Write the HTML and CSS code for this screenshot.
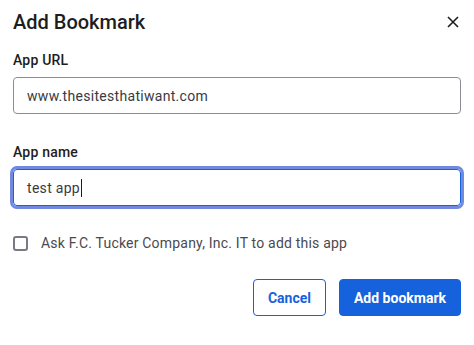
FILE: index.html
```html
<!DOCTYPE html>
<html lang="en">
<head>
    <meta charset="UTF-8">
    <meta name="viewport" content="width=device-width, initial-scale=1.0">
    <title>Add Bookmark</title>
    <link rel="stylesheet" href="styles.css">
</head>
<body>
    <div class="dialog">
        <div class="dialog-header">
            <h1>Add Bookmark</h1>
            <button class="close-btn" aria-label="Close">
                <svg width="12" height="12" viewBox="0 0 12 12">
                    <path d="M1 1 L11 11 M11 1 L1 11" stroke="#1d1d21" stroke-width="1.6" fill="none"/>
                </svg>
            </button>
        </div>

        <label class="field-label" for="appUrl">App URL</label>
        <div class="field">
            <input type="text" id="appUrl" value="www.thesitesthatiwant.com">
        </div>

        <label class="field-label second" for="appName">App name</label>
        <div class="field focused">
            <span class="field-value">test app</span><span class="caret"></span>
        </div>

        <label class="check-row">
            <span class="checkbox"></span>
            <span>Ask F.C. Tucker Company, Inc. IT to add this app</span>
        </label>

        <div class="actions">
            <button class="btn btn-secondary">Cancel</button>
            <button class="btn btn-primary">Add bookmark</button>
        </div>
    </div>
</body>
</html>
```

FILE: styles.css
```css
body {
    margin: 0;
    background: #fff;
    font-family: Roboto, "Noto Sans", Arial, sans-serif;
    color: #1d1d21;
}
.dialog {
    padding: 8px 13px 13px 13px;
}
.dialog-header {
    display: flex;
    align-items: center;
    justify-content: space-between;
}
h1 {
    margin: 0;
    font-size: 20px;
    line-height: 28px;
    font-weight: 500;
    color: #1d1d21;
}
.close-btn {
    background: none;
    border: none;
    padding: 0;
    margin-right: 1px;
    width: 14px;
    height: 14px;
    display: flex;
    align-items: center;
    justify-content: center;
    cursor: pointer;
}
.field-label {
    display: block;
    margin-top: 14px;
    font-size: 14px;
    line-height: 20px;
    font-weight: 500;
    letter-spacing: 0.2px;
    color: #1d1d21;
}
.field-label.second {
    margin-top: 28px;
}
.field {
    margin-top: 7px;
    height: 37px;
    box-sizing: border-box;
    border: 1px solid #8c8c96;
    border-radius: 4px;
    display: flex;
    align-items: center;
    padding: 0 13px;
}
.field input {
    border: none;
    outline: none;
    padding: 0;
    width: 100%;
    font-family: inherit;
    font-size: 14px;
    letter-spacing: 0.3px;
    color: #3a3a3f;
    background: transparent;
}
.field.focused {
    border-color: #1662dd;
    box-shadow: 0 0 0 3px #7289e0;
}
.field-value {
    font-size: 14px;
    letter-spacing: 0.3px;
    color: #3a3a3f;
}
.caret {
    display: inline-block;
    width: 1px;
    height: 18px;
    background: #1d1d21;
    margin-left: 1px;
}
.check-row {
    display: flex;
    align-items: center;
    margin-top: 27px;
    font-size: 14px;
    line-height: 20px;
    letter-spacing: 0.2px;
    color: #4a4a50;
}
.checkbox {
    width: 15px;
    height: 15px;
    box-sizing: border-box;
    border: 2px solid #7a7a85;
    border-radius: 3px;
    margin-right: 13px;
}
.actions {
    display: flex;
    justify-content: flex-end;
    gap: 13px;
    margin-top: 26px;
}
.btn {
    height: 37px;
    box-sizing: border-box;
    border-radius: 4px;
    font-family: inherit;
    font-size: 14px;
    font-weight: 700;
    padding: 0 14px;
    cursor: pointer;
}
.btn-secondary {
    background: #fff;
    border: 1px solid #1662dd;
    color: #1662dd;
}
.btn-primary {
    background: #1662dd;
    border: 1px solid #1662dd;
    color: #fff;
}
```
